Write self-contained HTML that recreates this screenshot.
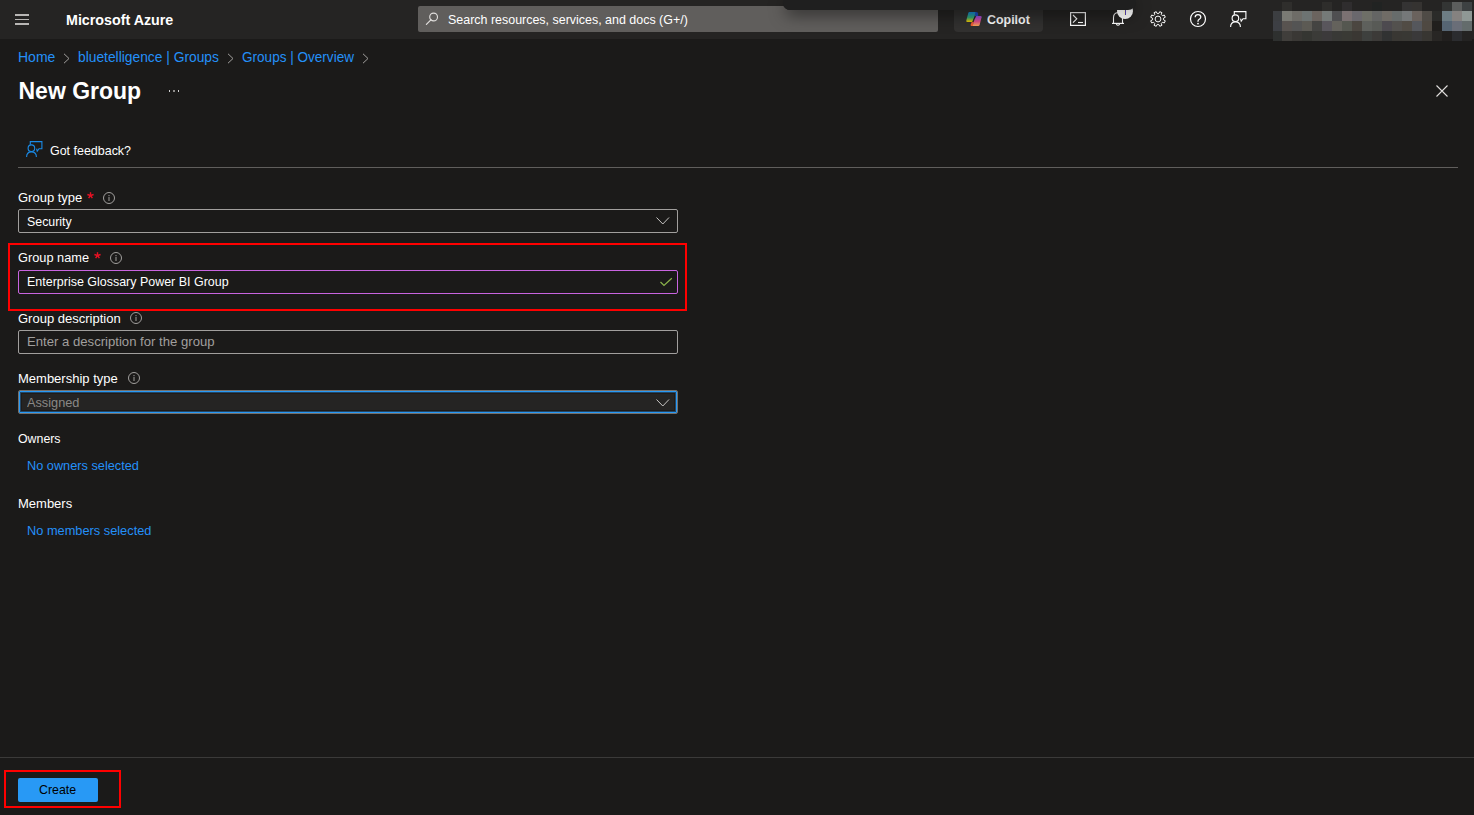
<!DOCTYPE html>
<html><head><meta charset="utf-8">
<style>
html,body{margin:0;padding:0;}
body{width:1474px;height:815px;overflow:hidden;background:#1b1a19;position:relative;font-family:"Liberation Sans",sans-serif;color:#fff;}
.a{position:absolute;white-space:nowrap;line-height:1;transform-origin:0 0;}
.p{position:absolute;}
#hdr{position:absolute;left:0;top:0;width:1474px;height:39px;background:#252423;}
.lbl{font-size:13px;color:#fff;}
.lnk{color:#2490f8;}
.box{position:absolute;left:18px;width:658px;height:22px;border:1px solid #a19f9d;border-radius:2px;}
.req{position:absolute;color:#e81123;font-size:13px;line-height:1;}
svg{position:absolute;overflow:visible;}
.mz{position:absolute;width:10px;height:10px;}
</style></head>
<body>
<div id="hdr"></div>
<!-- hamburger -->
<div class="p" style="left:15px;top:14px;width:14px;height:1.5px;background:#b8b6b4"></div>
<div class="p" style="left:15px;top:18.5px;width:14px;height:1.5px;background:#b8b6b4"></div>
<div class="p" style="left:15px;top:23px;width:14px;height:1.5px;background:#b8b6b4"></div>
<div class="a" style="left:66px;top:12px;font-size:15px;font-weight:700;transform:scaleX(0.951)">Microsoft Azure</div>

<!-- search -->
<div class="p" style="left:418px;top:6px;width:520px;height:26px;background:#605e5c;border-radius:2px"></div>
<svg style="left:425px;top:12px" width="14" height="14" viewBox="0 0 14 14"><circle cx="8.6" cy="5" r="3.9" fill="none" stroke="#e1dfdd" stroke-width="1.1"/><path d="M5.9 7.8 L1.4 12.4" stroke="#e1dfdd" stroke-width="1.2" stroke-linecap="round"/></svg>
<div class="a" style="left:448px;top:13px;font-size:13px;transform:scaleX(0.958)">Search resources, services, and docs (G+/)</div>

<!-- copilot -->
<div class="p" style="left:954px;top:6px;width:89px;height:26px;background:#323130;border-radius:4px"></div>
<svg style="left:963px;top:9px" width="22" height="20" viewBox="0 0 22 20">
<defs>
<linearGradient id="g1" x1="0" y1="0" x2="0" y2="1"><stop offset="0" stop-color="#1890e0"/><stop offset="0.55" stop-color="#34ac78"/><stop offset="1" stop-color="#f0c600"/></linearGradient>
<linearGradient id="g2" x1="0" y1="0" x2="0" y2="1"><stop offset="0" stop-color="#9d4fe2"/><stop offset="0.55" stop-color="#e4508a"/><stop offset="1" stop-color="#f7a452"/></linearGradient>
</defs>
<path d="M12 3.1 H13.6 Q15 3.1 15.1 4.6 L15.1 7.2 H11.6 Z" fill="#1d4fc6"/>
<path d="M8.8 12.8 H10.9 L9.9 17 H8.6 Q7.4 17 7.6 15.8 Z" fill="#f25c33"/>
<path d="M6.4 3 H12.4 L11.6 7.2 L9.6 12.9 H4.4 Q3 12.9 3.3 11.4 L5.3 4.1 Q5.6 3 6.4 3 Z" fill="url(#g1)"/>
<path d="M13.4 6.9 H17.7 Q18.9 6.9 18.6 8.3 L16.6 15.9 Q16.3 17 15.2 17 H9.6 L11.6 10.2 Z" fill="url(#g2)"/>
<path d="M12 7.4 L9.6 13.1" stroke="#2a2624" stroke-width="0.9"/>
</svg>
<div class="a" style="left:987px;top:13px;font-size:13px;font-weight:700;transform:scaleX(0.956)">Copilot</div>

<!-- header icons -->
<svg style="left:1070px;top:12px" width="16" height="14" viewBox="0 0 16 14"><rect x="0.6" y="0.6" width="14.8" height="12.8" fill="none" stroke="#fff" stroke-width="1.2"/><path d="M3 3 L6.8 6.8 L3 10.6" fill="none" stroke="#fff" stroke-width="1.1"/><path d="M8 10.5 H13" stroke="#fff" stroke-width="1.1"/></svg>
<svg style="left:1111px;top:10px" width="24" height="18" viewBox="0 0 24 18"><path d="M2.5 13 V7.5 Q2.5 3 7 2.5 Q11.5 3 11.5 7.5 V13" fill="none" stroke="#fff" stroke-width="1.1"/><path d="M1 13.4 H13" stroke="#fff" stroke-width="1.2"/><path d="M5.3 14.2 Q7 16.4 8.7 14.2" fill="none" stroke="#fff" stroke-width="1.1"/></svg>
<svg style="left:1149px;top:10px" width="18" height="18" viewBox="-9 -9 18 18"><path fill="none" stroke="#fff" stroke-width="1" stroke-linejoin="round" d="M1.75 -7.29 L3.92 -6.39 L3.30 -4.40 L4.40 -3.30 L6.39 -3.92 L7.29 -1.75 L5.45 -0.77 L5.45 0.77 L7.29 1.75 L6.39 3.92 L4.40 3.30 L3.30 4.40 L3.92 6.39 L1.75 7.29 L0.77 5.45 L-0.77 5.45 L-1.75 7.29 L-3.92 6.39 L-3.30 4.40 L-4.40 3.30 L-6.39 3.92 L-7.29 1.75 L-5.45 0.77 L-5.45 -0.77 L-7.29 -1.75 L-6.39 -3.92 L-4.40 -3.30 L-3.30 -4.40 L-3.92 -6.39 L-1.75 -7.29 L-0.77 -5.45 L0.77 -5.45Z"/><circle r="2.9" fill="none" stroke="#fff" stroke-width="0.95"/></svg>
<svg style="left:1189px;top:10px" width="18" height="18" viewBox="0 0 18 18"><circle cx="9" cy="9" r="7.5" fill="none" stroke="#fff" stroke-width="1.2"/><path d="M6.2 7.2 Q6.2 4.6 9 4.6 Q11.8 4.6 11.8 7 Q11.8 8.4 10.3 9.2 Q9 9.9 9 11.2 V11.8" fill="none" stroke="#fff" stroke-width="1.3"/><circle cx="9" cy="13.6" r="0.9" fill="#fff"/></svg>
<svg style="left:1230px;top:11px" width="17" height="17" viewBox="0 0 17 17"><path d="M4.3 3.8 V0.6 H15.9 V7.7 H13 L11.2 10.2 L10.6 7.7" fill="none" stroke="#fff" stroke-width="1.1"/><circle cx="5.4" cy="7.2" r="3.3" fill="none" stroke="#fff" stroke-width="1.1"/><path d="M0.6 16 Q0.6 10.9 5.4 10.9 Q10.4 10.9 10.4 16" fill="none" stroke="#fff" stroke-width="1.1"/></svg>

<!-- mosaic -->
<div class="mz" style="left:1282px;top:2px;width:10px;height:9px;background:#2f2e2c"></div>
<div class="mz" style="left:1322px;top:2px;width:10px;height:9px;background:#2e2d2b"></div>
<div class="mz" style="left:1342px;top:2px;width:10px;height:9px;background:#2f2d2e"></div>
<div class="mz" style="left:1372px;top:2px;width:10px;height:9px;background:#212322"></div>
<div class="mz" style="left:1402px;top:2px;width:10px;height:9px;background:#343333"></div>
<div class="mz" style="left:1412px;top:2px;width:10px;height:9px;background:#353331"></div>
<div class="mz" style="left:1442px;top:2px;width:10px;height:9px;background:#333534"></div>
<div class="mz" style="left:1452px;top:2px;width:10px;height:9px;background:#5c5e5d"></div>
<div class="mz" style="left:1462px;top:2px;width:10px;height:9px;background:#3d4142"></div>
<div class="mz" style="left:1273px;top:11px;width:9px;height:10px;background:#3c3e41"></div>
<div class="mz" style="left:1282px;top:11px;width:10px;height:10px;background:#7a7a74"></div>
<div class="mz" style="left:1292px;top:11px;width:10px;height:10px;background:#6e6c67"></div>
<div class="mz" style="left:1302px;top:11px;width:10px;height:10px;background:#6d7372"></div>
<div class="mz" style="left:1312px;top:11px;width:10px;height:10px;background:#6b645f"></div>
<div class="mz" style="left:1322px;top:11px;width:10px;height:10px;background:#757a78"></div>
<div class="mz" style="left:1332px;top:11px;width:10px;height:10px;background:#4f4f51"></div>
<div class="mz" style="left:1342px;top:11px;width:10px;height:10px;background:#7b7172"></div>
<div class="mz" style="left:1352px;top:11px;width:10px;height:10px;background:#6a686d"></div>
<div class="mz" style="left:1362px;top:11px;width:10px;height:10px;background:#6e6f67"></div>
<div class="mz" style="left:1372px;top:11px;width:10px;height:10px;background:#646564"></div>
<div class="mz" style="left:1382px;top:11px;width:10px;height:10px;background:#706c66"></div>
<div class="mz" style="left:1392px;top:11px;width:10px;height:10px;background:#676c6b"></div>
<div class="mz" style="left:1402px;top:11px;width:10px;height:10px;background:#757879"></div>
<div class="mz" style="left:1412px;top:11px;width:10px;height:10px;background:#6a625d"></div>
<div class="mz" style="left:1422px;top:11px;width:10px;height:10px;background:#4f4b46"></div>
<div class="mz" style="left:1432px;top:11px;width:10px;height:10px;background:#2b2b29"></div>
<div class="mz" style="left:1442px;top:11px;width:10px;height:10px;background:#6d7d84"></div>
<div class="mz" style="left:1452px;top:11px;width:10px;height:10px;background:#858280"></div>
<div class="mz" style="left:1462px;top:11px;width:10px;height:10px;background:#8f9895"></div>
<div class="mz" style="left:1273px;top:21px;width:9px;height:10px;background:#3d3f44"></div>
<div class="mz" style="left:1282px;top:21px;width:10px;height:10px;background:#585350"></div>
<div class="mz" style="left:1292px;top:21px;width:10px;height:10px;background:#545454"></div>
<div class="mz" style="left:1302px;top:21px;width:10px;height:10px;background:#5c5a54"></div>
<div class="mz" style="left:1312px;top:21px;width:10px;height:10px;background:#444442"></div>
<div class="mz" style="left:1322px;top:21px;width:10px;height:10px;background:#59565c"></div>
<div class="mz" style="left:1332px;top:21px;width:10px;height:10px;background:#64625c"></div>
<div class="mz" style="left:1342px;top:21px;width:10px;height:10px;background:#555750"></div>
<div class="mz" style="left:1352px;top:21px;width:10px;height:10px;background:#4b4640"></div>
<div class="mz" style="left:1362px;top:21px;width:10px;height:10px;background:#5e605c"></div>
<div class="mz" style="left:1372px;top:21px;width:10px;height:10px;background:#585a56"></div>
<div class="mz" style="left:1382px;top:21px;width:10px;height:10px;background:#4d4a4f"></div>
<div class="mz" style="left:1392px;top:21px;width:10px;height:10px;background:#53514e"></div>
<div class="mz" style="left:1402px;top:21px;width:10px;height:10px;background:#514c45"></div>
<div class="mz" style="left:1412px;top:21px;width:10px;height:10px;background:#55575c"></div>
<div class="mz" style="left:1422px;top:21px;width:10px;height:10px;background:#4f4942"></div>
<div class="mz" style="left:1432px;top:21px;width:10px;height:10px;background:#211f1d"></div>
<div class="mz" style="left:1442px;top:21px;width:10px;height:10px;background:#566573"></div>
<div class="mz" style="left:1452px;top:21px;width:10px;height:10px;background:#6a6e78"></div>
<div class="mz" style="left:1462px;top:21px;width:10px;height:10px;background:#646c6c"></div>
<div class="mz" style="left:1273px;top:31px;width:9px;height:10px;background:#2e302f"></div>
<div class="mz" style="left:1282px;top:31px;width:10px;height:10px;background:#403e3b"></div>
<div class="mz" style="left:1292px;top:31px;width:10px;height:10px;background:#3a3835"></div>
<div class="mz" style="left:1302px;top:31px;width:10px;height:10px;background:#353632"></div>
<div class="mz" style="left:1312px;top:31px;width:10px;height:10px;background:#3b3b38"></div>
<div class="mz" style="left:1322px;top:31px;width:10px;height:10px;background:#3c3a3b"></div>
<div class="mz" style="left:1332px;top:31px;width:10px;height:10px;background:#393936"></div>
<div class="mz" style="left:1342px;top:31px;width:10px;height:10px;background:#3a3a35"></div>
<div class="mz" style="left:1352px;top:31px;width:10px;height:10px;background:#3a3733"></div>
<div class="mz" style="left:1362px;top:31px;width:10px;height:10px;background:#3e403e"></div>
<div class="mz" style="left:1372px;top:31px;width:10px;height:10px;background:#3c3a38"></div>
<div class="mz" style="left:1382px;top:31px;width:10px;height:10px;background:#313232"></div>
<div class="mz" style="left:1392px;top:31px;width:10px;height:10px;background:#393733"></div>
<div class="mz" style="left:1402px;top:31px;width:10px;height:10px;background:#393834"></div>
<div class="mz" style="left:1412px;top:31px;width:10px;height:10px;background:#3a393a"></div>
<div class="mz" style="left:1422px;top:31px;width:10px;height:10px;background:#383632"></div>
<div class="mz" style="left:1432px;top:31px;width:10px;height:10px;background:#282624"></div>
<div class="mz" style="left:1442px;top:31px;width:10px;height:10px;background:#211f1e"></div>
<div class="mz" style="left:1452px;top:31px;width:10px;height:10px;background:#2b2c2f"></div>
<div class="mz" style="left:1462px;top:31px;width:10px;height:10px;background:#242322"></div>
<div class="p" style="left:783px;top:-10px;width:352.5px;height:19.5px;background:#1f1f1f;border-radius:0 0 8px 7px;box-shadow:0 8px 16px -3px rgba(0,0,0,0.5)"></div>
<svg style="left:1117px;top:3px" width="16" height="16" viewBox="0 0 16 16"><defs><linearGradient id="bg1" x1="0" y1="0" x2="0" y2="1"><stop offset="0" stop-color="#c4c4c4"/><stop offset="1" stop-color="#e4e4e4"/></linearGradient></defs><circle cx="8" cy="8" r="8" fill="url(#bg1)"/><path d="M8.5 6 V12" stroke="#4b3aa0" stroke-width="1"/><path d="M7.5 6 V12" stroke="#e8e070" stroke-width="0.6" opacity="0.7"/></svg>
<div class="p" style="left:783px;top:-10px;width:352.5px;height:19.5px;background:#1f1f1f;border-radius:0 0 8px 7px"></div>

<!-- breadcrumb -->
<div class="a lnk" style="left:18px;top:50px;font-size:14px">Home</div>
<svg style="left:63px;top:53px" width="8" height="11" viewBox="0 0 8 11"><path d="M1 0.8 L6 5.5 L1 10.2" fill="none" stroke="#a19f9d" stroke-width="1"/></svg>
<div class="a lnk" style="left:78px;top:50px;font-size:14px;transform:scaleX(0.986)">bluetelligence | Groups</div>
<svg style="left:227px;top:53px" width="8" height="11" viewBox="0 0 8 11"><path d="M1 0.8 L6 5.5 L1 10.2" fill="none" stroke="#a19f9d" stroke-width="1"/></svg>
<div class="a lnk" style="left:241.5px;top:50px;font-size:14px;transform:scaleX(0.968)">Groups | Overview</div>
<svg style="left:362px;top:53px" width="8" height="11" viewBox="0 0 8 11"><path d="M1 0.8 L6 5.5 L1 10.2" fill="none" stroke="#a19f9d" stroke-width="1"/></svg>

<div class="a" style="left:18.5px;top:80px;font-size:23px;font-weight:700;transform:scaleX(1.0)">New Group</div>
<div class="p" style="left:168.8px;top:90px;width:1.6px;height:2px;background:#d0d0d0"></div>
<div class="p" style="left:173px;top:90px;width:2px;height:2px;background:#8e8c8a"></div>
<div class="p" style="left:177.6px;top:90px;width:1.6px;height:2px;background:#d0d0d0"></div>
<svg style="left:1436px;top:85px" width="12" height="12" viewBox="0 0 12 12"><path d="M0.5 0.5 L11.5 11.5 M11.5 0.5 L0.5 11.5" stroke="#e1dfdd" stroke-width="1.1"/></svg>

<svg style="left:26px;top:141px" width="17" height="17" viewBox="0 0 17 17"><path d="M4.3 3.8 V0.6 H15.9 V7.7 H13 L11.2 10.2 L10.6 7.7" fill="none" stroke="#1a8ae6" stroke-width="1.1"/><circle cx="5.4" cy="7.2" r="3.3" fill="none" stroke="#1a8ae6" stroke-width="1.1"/><path d="M0.6 16 Q0.6 10.9 5.4 10.9 Q10.4 10.9 10.4 16" fill="none" stroke="#1a8ae6" stroke-width="1.1"/></svg>
<div class="a" style="left:50px;top:144px;font-size:13px;transform:scaleX(0.958)">Got feedback?</div>
<div class="p" style="left:18px;top:167px;width:1440px;height:1px;background:#605e5c"></div>

<!-- Group type -->
<div class="a lbl" style="left:18px;top:191px">Group type</div>
<svg style="left:86.5px;top:191.8px" width="7" height="7" viewBox="-3.5 -3.5 7 7"><g stroke="#e81123" stroke-width="1.4" stroke-linecap="butt"><path d="M0 0 V-3.3"/><path d="M0 0 L3.1 -1"/><path d="M0 0 L-3.1 -1"/><path d="M0 0 L1.9 2.7"/><path d="M0 0 L-1.9 2.7"/></g></svg>
<svg style="left:103px;top:192px" width="12" height="12" viewBox="0 0 12 12"><circle cx="6" cy="6" r="5.5" fill="none" stroke="#a19f9d" stroke-width="1"/><rect x="5.4" y="4.8" width="1.2" height="4.2" fill="#8a8886"/><rect x="5.4" y="3" width="1.2" height="1" fill="#8a8886"/></svg>
<div class="box" style="top:209px"></div>
<div class="a lbl" style="left:27px;top:215px;transform:scaleX(0.952)">Security</div>
<svg style="left:656px;top:217px" width="14" height="8" viewBox="0 0 14 8"><path d="M0.5 0.5 L6.8 7 L13 0.5" fill="none" stroke="#c8c6c4" stroke-width="1"/></svg>

<!-- Group name -->
<div class="p" style="left:8px;top:243px;width:675px;height:64px;border:2px solid #ff0000"></div>
<div class="a lbl" style="left:18px;top:251px;transform:scaleX(0.983)">Group name</div>
<svg style="left:93.8px;top:251.8px" width="7" height="7" viewBox="-3.5 -3.5 7 7"><g stroke="#e81123" stroke-width="1.4" stroke-linecap="butt"><path d="M0 0 V-3.3"/><path d="M0 0 L3.1 -1"/><path d="M0 0 L-3.1 -1"/><path d="M0 0 L1.9 2.7"/><path d="M0 0 L-1.9 2.7"/></g></svg>
<svg style="left:110px;top:252px" width="12" height="12" viewBox="0 0 12 12"><circle cx="6" cy="6" r="5.5" fill="none" stroke="#a19f9d" stroke-width="1"/><rect x="5.4" y="4.8" width="1.2" height="4.2" fill="#8a8886"/><rect x="5.4" y="3" width="1.2" height="1" fill="#8a8886"/></svg>
<div class="box" style="top:270px;border-color:#c964e0"></div>
<div class="a lbl" style="left:27px;top:275px;transform:scaleX(0.959)">Enterprise Glossary Power BI Group</div>
<svg style="left:660px;top:278px" width="13" height="9" viewBox="0 0 13 9"><path d="M0.5 4 L4 7.5 L11.8 0.3" fill="none" stroke="#8cb44c" stroke-width="1.2"/></svg>

<!-- description -->
<div class="a lbl" style="left:18px;top:312px">Group description</div>
<svg style="left:130px;top:312px" width="12" height="12" viewBox="0 0 12 12"><circle cx="6" cy="6" r="5.5" fill="none" stroke="#a19f9d" stroke-width="1"/><rect x="5.4" y="4.8" width="1.2" height="4.2" fill="#8a8886"/><rect x="5.4" y="3" width="1.2" height="1" fill="#8a8886"/></svg>
<div class="box" style="top:330px"></div>
<div class="a lbl" style="left:27px;top:335px;color:#a19f9d;transform:scaleX(1.01)">Enter a description for the group</div>

<!-- membership -->
<div class="a lbl" style="left:18px;top:372px">Membership type</div>
<svg style="left:128px;top:372px" width="12" height="12" viewBox="0 0 12 12"><circle cx="6" cy="6" r="5.5" fill="none" stroke="#a19f9d" stroke-width="1"/><rect x="5.4" y="4.8" width="1.2" height="4.2" fill="#8a8886"/><rect x="5.4" y="3" width="1.2" height="1" fill="#8a8886"/></svg>
<div class="p" style="left:18px;top:390px;width:658px;height:22px;border:1px solid #75706a;border-radius:2px;background:#252423;box-shadow:inset 0 0 0 1px #2899f5, inset 0 0 0 2px rgba(40,153,245,0.35), inset 0 0 0 3px rgba(25,18,12,0.45)"></div>
<div class="a lbl" style="left:27px;top:396px;color:#8a8886;transform:scaleX(0.98)">Assigned</div>
<svg style="left:656px;top:399px" width="14" height="8" viewBox="0 0 14 8"><path d="M0.5 0.5 L6.8 7 L13 0.5" fill="none" stroke="#c8c6c4" stroke-width="1"/></svg>

<div class="a lbl" style="left:18px;top:432px;transform:scaleX(0.95)">Owners</div>
<div class="a lbl lnk" style="left:27px;top:459px;transform:scaleX(0.98)">No owners selected</div>
<div class="a lbl" style="left:18px;top:497px">Members</div>
<div class="a lbl lnk" style="left:27px;top:524px;transform:scaleX(0.984)">No members selected</div>

<!-- footer -->
<div class="p" style="left:0;top:757px;width:1474px;height:1px;background:#3b3a39"></div>
<div class="p" style="left:4px;top:770px;width:113px;height:34px;border:2px solid #ff0000"></div>
<div class="p" style="left:18px;top:778px;width:80px;height:24px;background:#2899f5;border-radius:2px"></div>
<div class="a" style="left:39.3px;top:783px;font-size:13px;color:#000;transform:scaleX(0.95)">Create</div>
</body></html>
